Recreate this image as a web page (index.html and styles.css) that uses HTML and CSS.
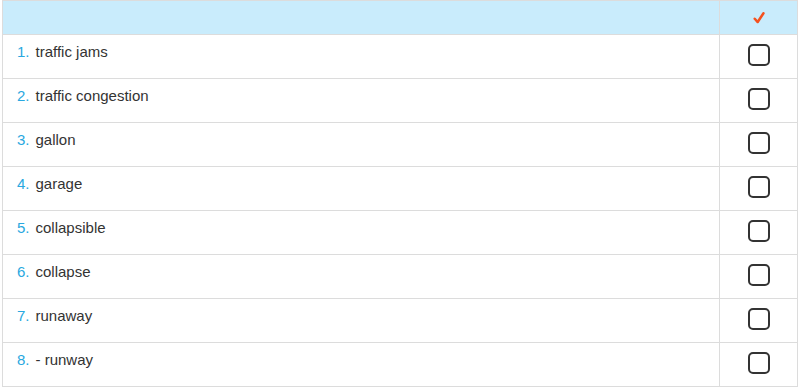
FILE: index.html
```html
<!DOCTYPE html>
<html>
<head>
<meta charset="utf-8">
<link rel="stylesheet" href="styles.css">
</head>
<body>
<div class="table">
  <div class="row head">
    <div class="word"></div>
    <div class="check"><svg class="tick" width="12" height="12" viewBox="0 0 11 11"><path d="M1.6 6.2 L4.3 9.2 L9.6 1.2" fill="none" stroke="#f4511e" stroke-width="2.3" stroke-linecap="round" stroke-linejoin="round"/></svg></div>
  </div>
  <div class="row"><div class="word"><span class="num">1.</span>traffic jams</div><div class="check"><span class="box"></span></div></div>
  <div class="row"><div class="word"><span class="num">2.</span>traffic congestion</div><div class="check"><span class="box"></span></div></div>
  <div class="row"><div class="word"><span class="num">3.</span>gallon</div><div class="check"><span class="box"></span></div></div>
  <div class="row"><div class="word"><span class="num">4.</span>garage</div><div class="check"><span class="box"></span></div></div>
  <div class="row"><div class="word"><span class="num">5.</span>collapsible</div><div class="check"><span class="box"></span></div></div>
  <div class="row"><div class="word"><span class="num">6.</span>collapse</div><div class="check"><span class="box"></span></div></div>
  <div class="row"><div class="word"><span class="num">7.</span>runaway</div><div class="check"><span class="box"></span></div></div>
  <div class="row"><div class="word"><span class="num">8.</span>- runway</div><div class="check"><span class="box"></span></div></div>
</div>
</body>
</html>
```
FILE: styles.css
```css
* { box-sizing: border-box; }
body {
  margin: 0;
  background: #fff;
  font-family: "Liberation Sans", Arial, sans-serif;
  font-size: 15px;
  color: #333;
}
.table {
  margin-left: 2px;
  width: 796px;
  border: 1px solid #dcdcdc;
  border-bottom: none;
}
.row {
  display: flex;
  height: 44px;
  border-bottom: 1px solid #dcdcdc;
}
.row.head {
  height: 34px;
  background: #c9ecfc;
}
.word {
  flex: 1;
  padding: 7px 0 0 14px;
  line-height: 20px;
  border-right: 1px solid #dcdcdc;
}
.num {
  color: #29a8e0;
  margin-right: 6px;
}
.check {
  width: 77px;
  display: flex;
  align-items: center;
  justify-content: center;
  padding-bottom: 3px;
}
.head .check {
  padding-bottom: 0;
  padding-top: 0;
}
.tick {
  display: block;
  margin-left: 1px;
}
.box {
  width: 22px;
  height: 22px;
  border: 2px solid #333;
  border-radius: 5px;
  background: #fff;
}
```
